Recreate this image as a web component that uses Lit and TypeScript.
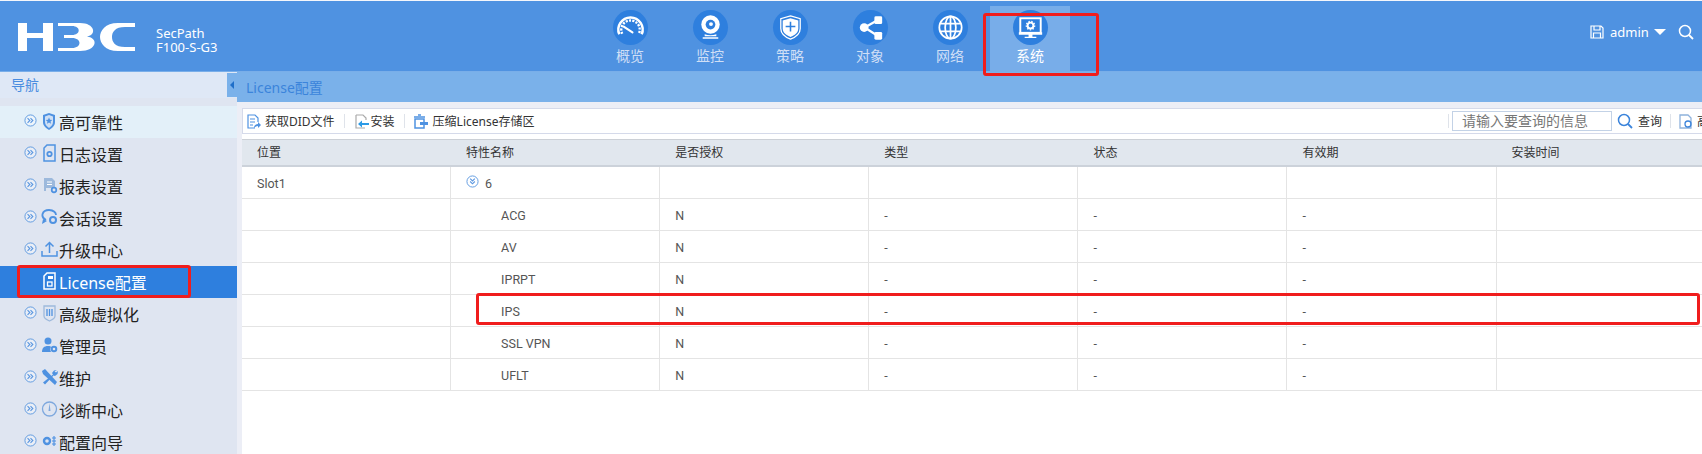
import { LitElement, html, css, svg } from "lit";
import { customElement } from "lit/decorators.js";

const C = "#fff";
const navIcons = [
  svg`<path d="M6.500 25a12.500 12.500 0 1 1 23 0" fill="none" stroke="${C}" stroke-width="2.600"/><path d="M9.500 24.500a9.500 9.500 0 1 1 17 0" fill="none" stroke="${C}" stroke-width="2.400" stroke-dasharray="2.200 1.300"/><path d="M11 17l9 6" stroke="${C}" stroke-width="2.200" stroke-linecap="round"/>`,
  svg`<circle cx="18" cy="15" r="9.500" fill="${C}"/><circle cx="18" cy="15" r="5" fill="#2e7fde"/><circle cx="18.500" cy="14.500" r="2" fill="${C}"/><path d="M12 25q6 2 12 0v2H12zM10 28h16v1.600H10z" fill="${C}"/>`,
  svg`<path d="M18 6l10 3v10c0 6-5 9-10 11-5-2-10-5-10-11V9z" fill="none" stroke="${C}" stroke-width="1.300"/><path d="M18 8.500l8 2.300v8.200c0 4.500-4 7-8 8.800-4-1.800-8-4.300-8-8.800v-8.200z" fill="${C}"/><path d="M18 12v10M13 17h10" stroke="#2e7fde" stroke-width="1.600"/>`,
  svg`<path d="M12 18l14-8M12 18l14 9" stroke="${C}" stroke-width="2.200"/><circle cx="11.500" cy="18" r="4.500" fill="${C}"/><rect x="22" y="6.500" width="8" height="8" rx="1.500" fill="${C}"/><rect x="22" y="22.500" width="8" height="8" rx="1.500" fill="${C}"/>`,
  svg`<g fill="none" stroke="${C}" stroke-width="1.800"><circle cx="18" cy="18" r="11.500"/><ellipse cx="18" cy="18" rx="5.500" ry="11.500"/><path d="M18 6.500v23M7 14h22M7 22h22"/></g>`,
  svg`<rect x="7.500" y="8.500" width="21" height="15" fill="none" stroke="${C}" stroke-width="2"/><path d="M6 23h24v2.500H6zM16 25h4v2.500h-4zM12 27.500h12v1.300H12z" fill="${C}"/><circle cx="18" cy="16" r="3" fill="none" stroke="${C}" stroke-width="2"/><circle cx="18" cy="16" r="4.400" fill="none" stroke="${C}" stroke-width="1.200" stroke-dasharray="1.500 1.500"/>`,
];
const nav = ["概览", "监控", "策略", "对象", "网络", "系统"];
const B = "#4f92e1";
const side: [string, unknown][] = [
  ["高可靠性", svg`<path d="M8 1l6 2v7c0 4-3 6-6 8-3-2-6-4-6-8V3z" fill="${B}"/><path d="M8 3l4 1.500V10c0 3-2 4.500-4 6-2-1.500-4-3-4-6V4.500z" fill="#cfe0f5"/><path d="M8 5.500l1 2.300 2.300.2-1.800 1.500.6 2.300L8 10.600l-2.100 1.200.6-2.300L4.700 8 7 7.800z" fill="${B}"/>`],
  ["日志设置", svg`<path d="M6 1h8v16H3V4z" fill="none" stroke="${B}" stroke-width="1.500"/><circle cx="8.500" cy="10" r="2.200" fill="none" stroke="${B}" stroke-width="1.800"/>`],
  ["报表设置", svg`<path d="M5 2h6l3 3v7H5v3H3V2z" fill="#9db9dc"/><path d="M6 6h5M6 8.500h5" stroke="#fff"/><circle cx="13" cy="14" r="2.300" fill="none" stroke="${B}" stroke-width="1.700"/>`],
  ["会话设置", svg`<path d="M5 12C-1 9 1 2 8 2c5 0 7 3 7 5" fill="none" stroke="${B}" stroke-width="1.800"/><path d="M2 11l-1 5 5-3z" fill="${B}"/><circle cx="12" cy="12" r="3" fill="none" stroke="${B}" stroke-width="2"/>`],
  ["升级中心", svg`<path d="M1 11v5h15v-5M8.500 13V3M4.500 6.500l4-4 4 4" fill="none" stroke="${B}" stroke-width="1.500"/>`],
  ["License配置", svg`<path d="M6 1h8v16H3V4z" fill="none" stroke="#fff" stroke-width="1.500"/><path d="M7 4h5v3H7z" fill="#fff"/><rect x="6.500" y="10" width="4.500" height="4" fill="none" stroke="#fff" stroke-width="1.300"/>`],
  ["高级虚拟化", svg`<path d="M3 2h11v10c0 2-3 4-5.500 5C6 16 3 14 3 12z" fill="none" stroke="#9db9dc" stroke-width="1.300"/><path d="M6 5v7M8.500 5v7M11 5v7" stroke="${B}" stroke-width="1.300"/>`],
  ["管理员", svg`<circle cx="7" cy="5" r="3.500" fill="${B}"/><path d="M1 16c0-4 2-6 6-6 2 0 3 .5 3 1-1 1-1 3 0 5z" fill="${B}"/><circle cx="13" cy="13" r="2.300" fill="none" stroke="${B}" stroke-width="2"/>`],
  ["维护", svg`<path d="M1 3l3-2 12 13-2 3L2 6z" fill="${B}"/><path d="M16 2l-3 .5-2 2.500 1 1.500-10 8 2 2 8.500-9 1.500.5 2.500-2 .5-3-2 1.500-1.500-1z" fill="${B}"/>`],
  ["诊断中心", svg`<circle cx="8.500" cy="9" r="7" fill="none" stroke="#7ea8de" stroke-width="1.300"/><path d="M8.500 3l1 8h-2z" fill="#7ea8de"/>`],
  ["配置向导", svg`<circle cx="6" cy="9" r="3" fill="none" stroke="${B}" stroke-width="2.400"/><path d="M13 4v10M11 6h4M11 9h4M11 12h4" stroke="${B}" stroke-width="1.200"/>`],
];
const rows = [
  ["Slot1", "6", "", "", "", "", ""],
  ["", "ACG", "N", "-", "-", "-", ""],
  ["", "AV", "N", "-", "-", "-", ""],
  ["", "IPRPT", "N", "-", "-", "-", ""],
  ["", "IPS", "N", "-", "-", "-", ""],
  ["", "SSL VPN", "N", "-", "-", "-", ""],
  ["", "UFLT", "N", "-", "-", "-", ""],
];
const heads = ["位置", "特性名称", "是否授权", "类型", "状态", "有效期", "安装时间"];

const chev = html`<svg class="chev" viewBox="0 0 14 14" width="13" height="13"><circle cx="7" cy="7" r="6" fill="#fff" fill-opacity=".35" stroke="#5b97e0" stroke-width="1"/><path d="M3.800 4.500L6.300 7 3.800 9.500M7 4.500L9.500 7 7 9.500" fill="none" stroke="#5b97e0" stroke-width="1.200"/></svg>`;

@customElement("app-root")
export class AppRoot extends LitElement {
  static styles = css`
    :host { display:block; position:relative; width:1702px; height:454px; overflow:hidden; background:#eceef6;
      font-family:"Noto Sans","Noto Sans CJK SC",sans-serif; }
    * { box-sizing:border-box; }
    .page { background:#f4f6fb; height:454px; display:flex; flex-direction:column; }
    .top { height:71px; flex:none; margin-top:1px; background:#4f92e1; display:flex; position:relative; border-bottom:1px solid #79aee9; }
    .logo { width:117px; margin:22px 0 0 18px; height:28px; flex:none; }
    .model { margin:25px 0 0 21px; color:#fff; font-size:13px; line-height:14px; flex:none; width:120px; white-space:pre-line; }
    .nav { display:flex; margin-left:314px; width:480px; flex:none; }
    .nav-item { width:80px; height:66px; margin-top:5px; display:flex; flex-direction:column; align-items:center; color:#cfdff6; font-size:14px; padding-top:4px; line-height:20px; }
    .nav-item.on { background:#78ade9; color:#fff; }
    .circle { width:35px; height:35px; border-radius:50%; background:#2e7fde; margin-bottom:1px; flex:none; }
    .user { position:absolute; top:19px; left:1590px; display:flex; align-items:center; color:#fff; font-size:13px; gap:6px; width:112px; height:24px; white-space:nowrap; overflow:hidden; }
    .user svg { flex:none; }
    .caret { border:solid transparent; border-width:6px 6px 0; border-top-color:#fff; margin-left:-1px; flex:none; }
    .ml6 { margin-left:6px; }
    .ml4 { margin-left:4px; }
    .body { display:flex; flex:1; min-height:0; }
    .side { width:237px; flex:none; background:#dfe5f1; overflow:hidden; position:relative; }
    .side-title { height:26px; background:#dfe8f6; color:#4a8de0; font-size:14px; line-height:26px; padding-left:11px; margin-bottom:8px; }
    .toggle { position:absolute; right:0; top:1px; width:10px; height:24px; background:#7ab1ea; display:flex; align-items:center; justify-content:center; }
    .toggle i { border:solid transparent; border-width:4px 4px 4px 0; border-right-color:#1f6fc9; }
    .item { height:32px; display:flex; align-items:center; color:#222; font-size:16px; padding-left:24px; }
    .item .ic { width:17px; height:18px; margin-left:4px; margin-right:1px; flex:none; margin-top:-2px; }
    .chev { margin-top:-4px; flex:none; }
    .item.hi { background:#e3f0f9; }
    .item.act { background:#2e7fde; color:#fff; }
    .item.act .ic { margin-left:17px; }
    .main { flex:1; min-width:0; display:flex; flex-direction:column; background:#eceef6; }
    .crumb { height:30px; background:#7ab1ea; color:#3b84db; font-size:14px; line-height:31px; padding-left:9px; }
    .gap { height:6px; background:#eceef6; }
    .mainin { flex:1; margin-left:5px; background:#fff; }
    .bar { height:26px; background:#fff; border:1px solid #d5daea; border-right:0; display:flex; align-items:center; font-size:12px; color:#333; margin-bottom:5px; white-space:nowrap; }
    .b { display:flex; align-items:center; gap:4px; flex:none; }
    .b svg { flex:none; }
    .b1 { margin-left:3px; }
    .b2 { gap:5px; }
    .b3 { width:24px; overflow:hidden; gap:3px; }
    .b4 { gap:2px; }
    .b5 { gap:5px; }
    .sep { width:1px; height:14px; background:#dfe3ea; margin:0 8px 0 9px; flex:none; }
    .sep1 { margin:0 3px 0 0; }
    .sep2 { margin:0 7px 0 8px; }
    .spacer { flex:1; }
    .search { width:160px; height:20px; border:1px solid #c3d2e6; color:#777; font-size:14px; line-height:18px; padding-left:9px; margin-right:5px; flex:none; }
    .grid { display:grid; grid-template-columns:repeat(7,209.100px); border-top:1px solid #ccd0d6; }
    .h { height:27px; background:#e1e7ee; border-bottom:2px solid #ccd2da; font-size:12px; color:#333; line-height:25px; padding-left:15px; }
    .c { height:32px; border-bottom:1px solid #e4e4e4; border-right:1px solid #e4e4e4; font-size:12.500px; font-family:Roboto,"Noto Sans CJK SC",sans-serif; color:#555; line-height:31px; padding:1px 0 0 15px; display:flex; align-items:center; gap:6px; }
    .c.sub { padding-left:50px; }
    .exp { margin-top:-4px; flex:none; }
    .mark { position:absolute; border:3px solid #f01d1d; border-radius:3px; pointer-events:none; }
    .m1 { left:983px; top:13px; width:116px; height:63px; }
    .m2 { left:17px; top:265px; width:174px; height:33px; }
    .m3 { left:476px; top:293px; width:1224px; height:32px; }
  `;

  render() {
    return html`<div class="page">
      <div class="top">
        <svg class="logo" viewBox="0 0 117 28"><path d="M0 0h9v10h16V0h10v28H25V15H9v13H0zM40 0h22c15 0 17 12 7 13.500 12 1.500 10 14.500-7 14.500H40v-3h14c10 0 10-10 0-10h-8v-3h8c9 0 9-9 0-9H40zM117 0H100C87 0 82 8 82 14s5 14 18 14h17v-4h-10C97 24 94 19 94 14s3-10 13-10h10z" fill="#fff"/></svg>
        <div class="model">${"SecPath\nF100-S-G3"}</div>
        <div class="nav">
          ${nav.map((n, i) => html`<div class="nav-item ${i === 5 ? "on" : ""}"><svg class="circle" viewBox="0 0 36 36">${navIcons[i]}</svg>${n}</div>`)}
        </div>
        <div class="user">
          <svg width="14" height="14" viewBox="0 0 14 14"><path d="M1 1h10l2 2v10H1zM4 1v4h6V1M3.500 13V8h7v5" fill="none" stroke="#fff" stroke-width="1.200"/></svg>
          <span>admin</span><i class="caret"></i>
          <svg class="ml6" width="16" height="16" viewBox="0 0 16 16"><circle cx="7" cy="7" r="5.500" fill="none" stroke="#fff" stroke-width="1.500"/><path d="M11 11l4 4" stroke="#fff" stroke-width="1.800"/></svg>
          <svg class="ml4" width="16" height="16" viewBox="0 0 16 16"><circle cx="8" cy="8" r="6.500" fill="none" stroke="#fff" stroke-width="1.300"/></svg>
        </div>
      </div>
      <div class="body">
        <div class="side">
          <div class="side-title">导航</div>
          <div class="toggle"><i></i></div>
          ${side.map(([t, ic], i) => html`<div class="item ${i === 0 ? "hi" : ""} ${i === 5 ? "act" : ""}">${i === 5 ? "" : chev}<svg class="ic" viewBox="0 0 17 18">${ic}</svg>${t}</div>`)}
        </div>
        <div class="main">
          <div class="crumb">License配置</div>
          <div class="gap"></div>
          <div class="mainin">
            <div class="bar">
              <div class="b b1"><svg width="15" height="15" viewBox="0 0 15 15"><path d="M9 14H2V1h7l3 3v4M4 5h5M4 8h5M4 11h3" fill="none" stroke="#4f92e1" stroke-width="1.200"/><path d="M8 14c0-3 2-4 4-4V8l3 3-3 3v-2c-2 0-3 1-4 2z" fill="#4f92e1"/></svg>获取DID文件</div>
              <div class="sep"></div>
              <div class="b b4"><svg width="16" height="15" viewBox="0 0 16 15"><path d="M3 1h7l3 3v2M3 1v13h9" fill="none" stroke="#aaa" stroke-width="1.200"/><path d="M16 9H9V6.500L5 10l4 3.500V11h7z" fill="#2c9ae6"/></svg>安装</div>
              <div class="sep"></div>
              <div class="b b5"><svg width="15" height="15" viewBox="0 0 15 15"><path d="M2 5h9v9H2zM1 3h11M5 1h3" fill="none" stroke="#4f92e1" stroke-width="1.500"/><path d="M7 8h8v3H7z" fill="#4f92e1"/></svg>压缩License存储区</div>
              <div class="spacer"></div>
              <div class="sep sep1"></div>
              <div class="search">请输入要查询的信息</div>
              <div class="b b2"><svg width="16" height="16" viewBox="0 0 16 16"><circle cx="7" cy="7" r="5.500" fill="none" stroke="#3b84db" stroke-width="1.500"/><path d="M11 11l4 4" stroke="#3b84db" stroke-width="1.800"/></svg>查询</div>
              <div class="sep sep2"></div>
              <div class="b b3"><svg width="16" height="15" viewBox="0 0 16 15"><path d="M2 1h8l3 3v10H2z" fill="none" stroke="#8fb2dc" stroke-width="1.300"/><circle cx="10" cy="10" r="3" fill="none" stroke="#3b84db" stroke-width="1.300"/></svg>高级</div>
            </div>
            <div class="grid">
              ${heads.map((h) => html`<div class="h">${h}</div>`)}
              ${rows.map((r, ri) =>
                r.map((v, ci) => html`<div class="c ${ci === 1 && ri > 0 ? "sub" : ""}">${ci === 1 && ri === 0 ? html`<svg class="exp" viewBox="0 0 14 14" width="13" height="13"><circle cx="7" cy="7" r="6" fill="none" stroke="#5b97e0"/><path d="M4.500 3.800L7 6.300 9.500 3.800M4.500 7L7 9.500 9.500 7" fill="none" stroke="#5b97e0" stroke-width="1.200"/></svg>` : ""}<span>${v}</span></div>`)
              )}
            </div>
          </div>
        </div>
      </div>
      <div class="mark m1"></div><div class="mark m2"></div><div class="mark m3"></div>
    </div>`;
  }
}
